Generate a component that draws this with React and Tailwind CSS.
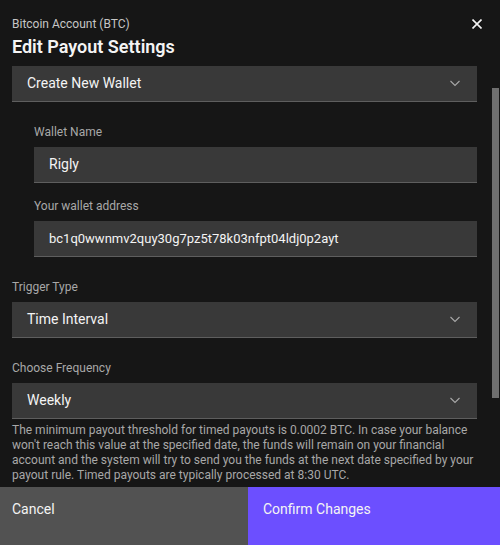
import React from 'react';

const Chevron = () => (
  <svg width="12" height="7" viewBox="0 0 12 7" fill="none" className="shrink-0">
    <path d="M1.5 1 L6 5.5 L10.5 1" stroke="#a8a8a8" strokeWidth="1.1" />
  </svg>
);

const Select = ({ value }) => (
  <div className="flex h-[36px] items-center justify-between border-b border-[#5e5e5e] bg-[#393939] pl-[15px] pr-[16px] text-[14px] text-[#f4f4f4]">
    <span>{value}</span>
    <Chevron />
  </div>
);

const Field = ({ label, value, small }) => (
  <div>
    <div className="mb-[7px] text-[12px] leading-4 text-[#a8a8a8]">{label}</div>
    <div
      className={`flex h-[36px] items-center border-b border-[#5e5e5e] bg-[#393939] px-[15px] text-[#f4f4f4] ${
        small ? 'text-[13px]' : 'text-[14px]'
      }`}
    >
      {value}
    </div>
  </div>
);

const App = () => {
  return (
    <div
      className="flex h-[545px] w-[500px] flex-col overflow-hidden bg-[#161616]"
      style={{ fontFamily: 'Roboto, "Liberation Sans", sans-serif' }}
    >
      {/* header */}
      <div className="flex h-[66px] shrink-0 items-start justify-between pl-3 pr-[18px] pt-4">
        <div>
          <div className="text-[12px] leading-4 text-[#c6c6c6]">Bitcoin Account (BTC)</div>
          <div className="mt-px text-[18px] font-semibold leading-7 text-[#f4f4f4]">Edit Payout Settings</div>
        </div>
        <button className="mt-[3px] p-0">
          <svg width="10" height="10" viewBox="0 0 10 10">
            <path d="M0.5 0.5 L9.5 9.5 M9.5 0.5 L0.5 9.5" stroke="#f4f4f4" strokeWidth="1.6" />
          </svg>
        </button>
      </div>

      {/* scrolling body */}
      <div className="relative flex-1 overflow-hidden">
        <div className="pl-3 pr-[23px]">
          <Select value="Create New Wallet" />
          <div className="mt-[22px] flex flex-col gap-[15px] pl-[22px]">
            <Field label="Wallet Name" value="Rigly" />
            <Field label="Your wallet address" value="bc1q0wwnmv2quy30g7pz5t78k03nfpt04ldj0p2ayt" small />
          </div>
          <div className="mt-[22px]">
            <Field label="Trigger Type" value={<div className="flex w-full items-center justify-between"><span>Time Interval</span><span className="mr-px"><Chevron /></span></div>} />
          </div>
          <div className="mt-[22px]">
            <Field label="Choose Frequency" value={<div className="flex w-full items-center justify-between"><span>Weekly</span><span className="mr-px"><Chevron /></span></div>} />
          </div>
          <p className="-mr-2 mt-[4px] text-[12px] leading-[15px] text-[#a8a8a8]">
            The minimum payout threshold for timed payouts is 0.0002 BTC. In case your balance won't reach this value at the specified date, the funds will remain on your financial account and the system will try to send you the funds at the next date specified by your payout rule. Timed payouts are typically processed at 8:30 UTC.
          </p>
        </div>
        {/* scrollbar thumb */}
        <div className="absolute right-px top-[22px] h-[310px] w-[7px] bg-[#6f6f6f]" />
      </div>

      {/* footer */}
      <div className="flex h-[58px] shrink-0">
        <button className="flex w-[248px] items-start bg-[#525252] pl-3 pt-[13px] text-left text-[14px] leading-[18px] text-[#f4f4f4]">
          Cancel
        </button>
        <button className="flex flex-1 items-start bg-[#6c4fff] pl-[15px] pt-[13px] text-left text-[14px] leading-[18px] text-[#f4f4f4]">
          Confirm Changes
        </button>
      </div>
    </div>
  );
};

export default App;
